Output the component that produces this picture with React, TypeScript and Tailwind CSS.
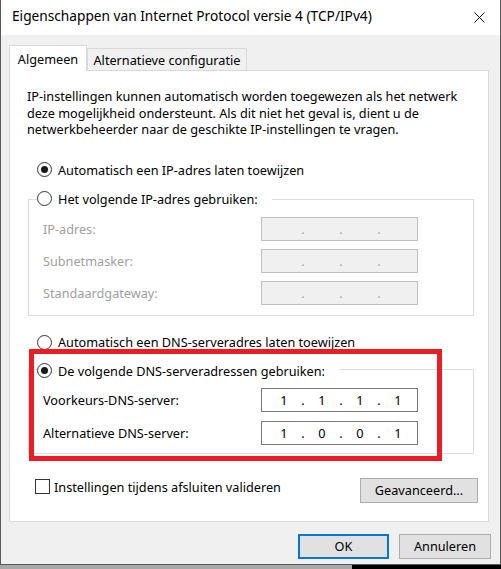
import { Fragment } from 'react'

const ipFields = ['IP-adres:', 'Subnetmasker:', 'Standaardgateway:']

const dnsFields = [
  { label: 'Voorkeurs-DNS-server:', octets: ['1', '1', '1', '1'] },
  { label: 'Alternatieve DNS-server:', octets: ['1', '0', '0', '1'] },
]

function Radio({ checked }: { checked?: boolean }) {
  return (
    <span className="flex h-[15px] w-[15px] shrink-0 items-center justify-center rounded-full border border-[#333333] bg-white">
      {checked && <span className="h-[7px] w-[7px] rounded-full bg-[#1a1a1a]" />}
    </span>
  )
}

function IpBox({ octets, disabled }: { octets?: string[]; disabled?: boolean }) {
  const vals = octets ?? ['', '', '', '']
  return (
    <div
      className={
        disabled
          ? 'flex h-[24px] w-[157px] items-center border border-[#bfbfbf] bg-[#f0f0f0] pl-[8px] text-[#a0a0a0]'
          : 'flex h-[24px] w-[157px] items-center border border-[#7a7a7a] bg-white pl-[8px] text-black'
      }
    >
      {vals.map((v, i) => (
        <Fragment key={i}>
          {i > 0 && <span className="w-[10px] text-center">.</span>}
          <span className="w-[28px] text-center">{v}</span>
        </Fragment>
      ))}
    </div>
  )
}

export default function App() {
  return (
    <div className="relative flex h-[569px] w-[501px] flex-col bg-[#f0f0f0] font-['Noto_Sans',sans-serif] text-[12.7px] leading-[16px] text-black">
      {/* dialog window */}
      <div className="flex h-[565px] flex-col border-x border-b border-[#5a5a5a]">
        {/* title bar */}
        <div className="flex h-[35px] items-center justify-between bg-white pl-[11px] pr-[15px]">
          <span className="pb-[3px] text-[13.7px]">Eigenschappen van Internet Protocol versie 4 (TCP/IPv4)</span>
          <svg width="11" height="11" viewBox="0 0 11 11" fill="none">
            <path d="M0.5 0.5L10.5 10.5M10.5 0.5L0.5 10.5" stroke="#111" strokeWidth="1" />
          </svg>
        </div>

        <div className="flex flex-1 flex-col bg-[#f0f0f0] px-[8px] pt-[10px]">
          {/* tabs */}
          <div className="flex h-[25px]">
            <div className="relative z-10 flex h-[26px] w-[78px] items-center justify-center self-start border border-b-0 border-[#d9d9d9] bg-white">
              Algemeen
            </div>
            <div className="flex h-[22px] w-[160px] items-center justify-center self-end border border-b-0 border-[#d9d9d9] bg-[#f0f0f0]">
              Alternatieve configuratie
            </div>
          </div>

          {/* panel */}
          <div className="flex w-[480px] flex-col border border-[#d9d9d9] bg-white pb-[18px] pt-[17px]">
            <p className="flex flex-col pl-[17px] leading-[16.5px]">
              <span className="whitespace-nowrap">IP-instellingen kunnen automatisch worden toegewezen als het netwerk</span>
              <span className="whitespace-nowrap">deze mogelijkheid ondersteunt. Als dit niet het geval is, dient u de</span>
              <span className="whitespace-nowrap">netwerkbeheerder naar de geschikte IP-instellingen te vragen.</span>
            </p>

            <div className="mt-[24px] flex h-[16px] items-center gap-[6px] pl-[27px]">
              <Radio checked />
              <span>Automatisch een IP-adres laten toewijzen</span>
            </div>

            <fieldset className="ml-[18px] mt-[13px] w-[446px] border border-[#dcdcdc]">
              <legend className="ml-[8px] pr-[14px]">
                <span className="inline-flex h-[16px] items-center gap-[6px]">
                  <Radio />
                  <span>Het volgende IP-adres gebruiken:</span>
                </span>
              </legend>
              <div className="grid grid-cols-[218px_157px] gap-y-[8px] pb-[10px] pl-[14px] pt-[8px]">
                {ipFields.map((label) => (
                  <Fragment key={label}>
                    <span className="flex items-center text-[#a0a0a0]">{label}</span>
                    <IpBox disabled />
                  </Fragment>
                ))}
              </div>
            </fieldset>

            <div className="mt-[18px] flex h-[16px] items-center gap-[6px] pl-[27px]">
              <Radio />
              <span>Automatisch een DNS-serveradres laten toewijzen</span>
            </div>

            <fieldset className="ml-[18px] mt-[11px] w-[446px] border border-[#dcdcdc]">
              <legend className="ml-[8px] pr-[14px]">
                <span className="inline-flex h-[16px] items-center gap-[6px]">
                  <Radio checked />
                  <span>De volgende DNS-serveradressen gebruiken:</span>
                </span>
              </legend>
              <div className="grid grid-cols-[218px_157px] gap-y-[9px] pb-[8px] pl-[14px] pt-[9px]">
                {dnsFields.map((f) => (
                  <Fragment key={f.label}>
                    <span className="flex items-center">{f.label}</span>
                    <IpBox octets={f.octets} />
                  </Fragment>
                ))}
              </div>
            </fieldset>

            <div className="mt-[24px] flex items-start justify-between pl-[25px] pr-[10px]">
              <div className="mt-[1px] flex h-[16px] items-center gap-[4px]">
                <span className="h-[15px] w-[15px] border border-[#333333] bg-white" />
                <span>Instellingen tijdens afsluiten valideren</span>
              </div>
              <button className="flex h-[25px] w-[118px] items-center justify-center border border-[#adadad] bg-[#e1e1e1]">
                Geavanceerd...
              </button>
            </div>
          </div>

          {/* footer buttons */}
          <div className="mr-[1px] flex justify-end gap-[10px] pt-[12px]">
            <button className="flex h-[25px] w-[91px] items-center justify-center border-2 border-[#0078d7] bg-[#e1e1e1]">
              OK
            </button>
            <button className="flex h-[25px] w-[92px] items-center justify-center border border-[#adadad] bg-[#e1e1e1]">
              Annuleren
            </button>
          </div>
        </div>
      </div>

      {/* strip below the window */}
      <div className="flex h-[4px]">
        <div className="w-[352px] bg-[#a8a8a8]" />
        <div className="flex-1 bg-black" />
      </div>

      {/* red highlight annotation */}
      <div className="absolute left-[29px] top-[349px] h-[112px] w-[413px] border-[5px] border-[#ec1c24]" />
    </div>
  )
}
